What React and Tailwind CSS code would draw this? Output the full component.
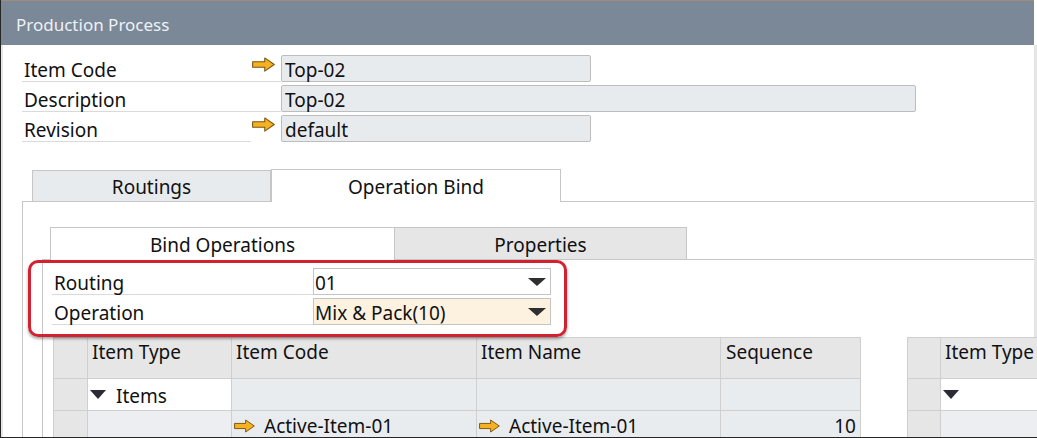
import React from 'react';

const font = { fontFamily: '"Noto Sans", "DejaVu Sans", sans-serif' };

const Arrow = ({ className = 'w-[23px] h-[15px]' }) => (
  <svg viewBox="0 0 22 14" className={className}>
    <polygon
      points="0.6,4.3 12.2,4.3 12.2,0.7 21.3,7 12.2,13.3 12.2,9.7 0.6,9.7"
      fill="#f4b222"
      stroke="#7a5410"
      strokeWidth="1"
      strokeLinejoin="round"
    />
  </svg>
);

const DropTriangle = () => (
  <svg viewBox="0 0 18 8" className="w-[18px] h-[8px]">
    <polygon points="0,0 18,0 9,8" fill="#2f2f2f" />
  </svg>
);

const RowTriangle = () => (
  <svg viewBox="0 0 16 9" className="w-[16px] h-[9px]">
    <polygon points="0,0 16,0 8,9" fill="#2b2b36" />
  </svg>
);

const headerFields = [
  { label: 'Item Code', value: 'Top-02', arrow: true, wide: false, line: true },
  { label: 'Description', value: 'Top-02', arrow: false, wide: true, line: true },
  { label: 'Revision', value: 'default', arrow: true, wide: false, line: false },
];

const HeaderRow = ({ label, value, arrow, wide, line }) => (
  <div className="flex h-[27px]">
    <div className="w-[229px] border-b border-[#dadada] pl-[2px] pt-[4px] flex items-center leading-[22px]">
      {label}
    </div>
    <div className={`w-[30px] flex items-start pt-[2px] pl-[1px] ${line ? 'border-b border-[#dadada]' : ''}`}>
      {arrow && <Arrow />}
    </div>
    <div
      className={`${wide ? 'w-[635px]' : 'w-[310px]'} h-[27px] bg-[#e8ebee] border border-[#bdbdbd] rounded-[2px] pl-[3px] pt-[3px] flex items-center leading-[22px]`}
    >
      {value}
    </div>
  </div>
);

const SelectRow = ({ label, value, bg }) => (
  <div className="flex h-[27px]">
    <div className="w-[261px] border-b border-[#dadada] pl-[2px] pt-[3px] flex items-center leading-[22px]">
      {label}
    </div>
    <div className={`w-[238px] h-[27px] border border-[#c4c4c4] ${bg} pl-[1px] pr-[4px] flex items-center justify-between leading-[22px]`}>
      <span className="pt-[3px]">{value}</span>
      <DropTriangle />
    </div>
  </div>
);

const cell = 'border-r border-b border-[#cfcfcf]';

const MainGrid = () => (
  <div className="border-l border-t border-[#cfcfcf] grid grid-cols-[34px_144px_245px_244px_140px] shrink-0">
    {/* header */}
    <div className={`${cell} bg-[#e6e6e6] h-[41px]`} />
    <div className={`${cell} bg-[#e6e6e6] h-[41px] pl-[4px] pt-[3px] leading-[22px]`}>Item Type</div>
    <div className={`${cell} bg-[#e6e6e6] h-[41px] pl-[4px] pt-[3px] leading-[22px]`}>Item Code</div>
    <div className={`${cell} bg-[#e6e6e6] h-[41px] pl-[4px] pt-[3px] leading-[22px]`}>Item Name</div>
    <div className={`${cell} bg-[#e6e6e6] h-[41px] pl-[5px] pt-[3px] leading-[22px]`}>Sequence</div>
    {/* group row */}
    <div className={`${cell} bg-[#e6e6e6] h-[32px]`} />
    <div className={`${cell} bg-white h-[32px] pl-[2px] flex items-center gap-[10px] leading-[22px]`}>
      <RowTriangle />
      <span className="pt-[2px]">Items</span>
    </div>
    <div className={`${cell} bg-[#e9ecef] h-[32px]`} />
    <div className={`${cell} bg-[#e9ecef] h-[32px]`} />
    <div className={`${cell} bg-[#e9ecef] h-[32px]`} />
    {/* item row */}
    <div className="border-r border-[#cfcfcf] bg-[#e6e6e6] h-[27px]" />
    <div className="border-r border-[#cfcfcf] bg-[#eceef1] h-[27px]" />
    <div className="border-r border-[#cfcfcf] bg-[#e9ecef] h-[27px] pl-[2px] pt-[2px] flex items-center gap-[9px] leading-[22px]">
      <Arrow className="w-[21px] h-[14px]" />
      <span>Active-Item-01</span>
    </div>
    <div className="border-r border-[#cfcfcf] bg-[#e9ecef] h-[27px] pl-[2px] pt-[2px] flex items-center gap-[9px] leading-[22px]">
      <Arrow className="w-[21px] h-[14px]" />
      <span>Active-Item-01</span>
    </div>
    <div className="border-r border-[#cfcfcf] bg-[#e9ecef] h-[27px] pr-[4px] pt-[2px] flex items-center justify-end leading-[22px]">10</div>
  </div>
);

const SideGrid = () => (
  <div className="border-l border-t border-[#cfcfcf] grid grid-cols-[33px_140px] shrink-0">
    <div className={`${cell} bg-[#e6e6e6] h-[41px]`} />
    <div className={`${cell} bg-[#e6e6e6] h-[41px] pl-[4px] pt-[3px] leading-[22px] whitespace-nowrap`}>Item Type</div>
    <div className={`${cell} bg-[#e6e6e6] h-[32px]`} />
    <div className={`${cell} bg-white h-[32px] pl-[2px] flex items-center`}>
      <RowTriangle />
    </div>
    <div className="border-r border-[#cfcfcf] bg-[#e6e6e6] h-[27px]" />
    <div className="border-r border-[#cfcfcf] bg-[#eceef1] h-[27px]" />
  </div>
);

export default function App() {
  return (
    <div
      style={font}
      className="relative w-[1037px] h-[438px] overflow-hidden bg-white text-[19px] text-[#111] border-l border-b border-[#262626]"
    >
      {/* title bar */}
      <div className="h-[45px] bg-[#7b8898] border-t border-[#a18c7c] mr-[3px] pl-[15px] pt-[3px] flex items-center text-[17px] text-[#eef1f5]">
        Production Process
      </div>

      <div className="border-l-2 border-r-[3px] border-[#e6e6e6] h-full">
        {/* header fields */}
        <div className="pt-[10px] pl-[19px] flex flex-col gap-[3px]">
          {headerFields.map((f) => (
            <HeaderRow key={f.label} {...f} />
          ))}
        </div>

        {/* outer tabs */}
        <div className="mt-[27px] ml-[19px]">
          <div className="flex items-end h-[33px] border-b border-[#c6c6c6] pl-[10px]">
            <div className="w-[239px] h-[31px] pt-[2px] bg-[#e8ebee] border border-b-0 border-[#c6c6c6] flex items-center justify-center leading-[22px]">
              Routings
            </div>
            <div className="relative w-[290px] h-[33px] pt-[2px] -mb-px bg-white border border-b-0 border-[#c6c6c6] flex items-center justify-center leading-[22px]">
              Operation Bind
            </div>
          </div>

          <div className="border-l border-[#c6c6c6] pt-[25px] h-[300px]">
            {/* inner tabs */}
            <div className="ml-[19px]">
              <div className="flex items-end h-[33px] border-b border-[#c6c6c6] pl-[8px]">
                <div className="relative w-[345px] h-[33px] pt-[2px] -mb-px bg-white border border-b-0 border-[#c6c6c6] flex items-center justify-center leading-[22px]">
                  Bind Operations
                </div>
                <div className="w-[292px] h-[32px] pt-[2px] bg-[#e6e6e6] border border-b-0 border-l-0 border-[#c6c6c6] flex items-center justify-center leading-[22px]">
                  Properties
                </div>
              </div>

              <div className="border-l border-[#c6c6c6] h-[200px]">
                <div className="pt-[8px] pl-[9px] flex flex-col gap-[3px]">
                  <SelectRow label="Routing" value="01" bg="bg-white" />
                  <SelectRow label="Operation" value="Mix & Pack(10)" bg="bg-[#fdf2e0]" />
                </div>

                <div className="mt-[12px] ml-[10px] flex gap-[46px]">
                  <MainGrid />
                  <SideGrid />
                </div>
              </div>
            </div>
          </div>
        </div>
      </div>

      {/* annotation highlight */}
      <div className="pointer-events-none absolute left-[27px] top-[260px] w-[539px] h-[77px] border-[3px] border-[#d3222f] rounded-[10px] shadow-[0_2px_3px_rgba(0,0,0,0.35)]" />
    </div>
  );
}
